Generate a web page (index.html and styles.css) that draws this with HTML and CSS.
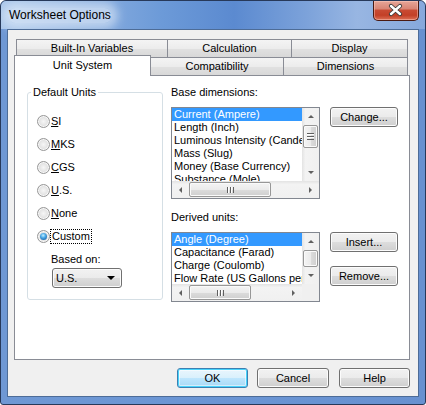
FILE: index.html
```html
<!DOCTYPE html>
<html>
<head>
<meta charset="utf-8">
<link rel="stylesheet" href="styles.css">
</head>
<body>
<div class="window">
  <div class="titlebar">
    <span class="title">Worksheet Options</span>
    <div class="close">
      <svg width="44" height="18" viewBox="0 0 44 18">
        <path d="M17 5 L26 13 M26 5 L17 13" stroke="#3a3a3a" stroke-width="4.2" stroke-linecap="round" fill="none"/>
        <path d="M17 5 L26 13 M26 5 L17 13" stroke="#ffffff" stroke-width="2.4" stroke-linecap="round" fill="none"/>
      </svg>
    </div>
  </div>
  <div class="client">
    <div class="tabs">
      <div class="tabrow back">
        <div class="tab t-builtin">Built-In Variables</div>
        <div class="tab t-calc">Calculation</div>
        <div class="tab t-display">Display</div>
      </div>
      <div class="tabrow front">
        <div class="tab sel">Unit System</div>
        <div class="tab t-compat">Compatibility</div>
        <div class="tab t-dims">Dimensions</div>
      </div>
    </div>
    <div class="panel">
      <fieldset class="group">
        <legend>Default Units</legend>
        <div class="radio-row"><span class="radio"></span><span class="rlabel"><u>S</u>I</span></div>
        <div class="radio-row"><span class="radio"></span><span class="rlabel"><u>M</u>KS</span></div>
        <div class="radio-row"><span class="radio"></span><span class="rlabel"><u>C</u>GS</span></div>
        <div class="radio-row"><span class="radio"></span><span class="rlabel"><u>U</u>.S.</span></div>
        <div class="radio-row"><span class="radio"></span><span class="rlabel"><u>N</u>one</span></div>
        <div class="radio-row"><span class="radio checked"></span><span class="rlabel focus">Custom</span></div>
        <div class="based">Based on:</div>
        <div class="select"><span class="sel-text">U.S.</span><span class="caret"></span></div>
      </fieldset>
      <div class="right">
        <div class="section">
          <div class="listcol">
            <div class="caption">Base dimensions:</div>
            <div class="listbox base">
              <div class="items">
                <div class="item selected">Current (Ampere)</div>
                <div class="item">Length (Inch)</div>
                <div class="item">Luminous Intensity (Candela)</div>
                <div class="item">Mass (Slug)</div>
                <div class="item">Money (Base Currency)</div>
                <div class="item">Substance (Mole)</div>
                <div class="item">Temperature (Fahrenheit)</div>
              </div>
              <div class="vscroll">
                <div class="arr up"></div>
                <div class="vtrack"><div class="vthumb"><span class="vgrip"></span></div></div>
                <div class="arr down"></div>
              </div>
              <div class="hscroll full">
                <div class="arr left"></div>
                <div class="htrack"><div class="hthumb"><span class="hgrip"></span></div></div>
                <div class="arr right"></div>
              </div>
            </div>
          </div>
          <div class="btncol">
            <div class="btn">Change...</div>
          </div>
        </div>
        <div class="section second">
          <div class="listcol">
            <div class="caption">Derived units:</div>
            <div class="listbox derived">
              <div class="items">
                <div class="item selected">Angle (Degree)</div>
                <div class="item">Capacitance (Farad)</div>
                <div class="item">Charge (Coulomb)</div>
                <div class="item">Flow Rate (US Gallons per Minute)</div>
                <div class="item">Force (Pound)</div>
              </div>
              <div class="vscroll">
                <div class="arr up"></div>
                <div class="vtrack"><div class="vthumb short"></div></div>
                <div class="arr down"></div>
              </div>
              <div class="hscroll">
                <div class="arr left"></div>
                <div class="htrack"><div class="hthumb narrow"><span class="hgrip"></span></div></div>
                <div class="arr right"></div>
              </div>
              <div class="corner"></div>
            </div>
          </div>
          <div class="btncol">
            <div class="btn">Insert...</div>
            <div class="btn gap">Remove...</div>
          </div>
        </div>
      </div>
    </div>
    <div class="footer">
      <div class="btn fbtn default">OK</div>
      <div class="btn fbtn cancel">Cancel</div>
      <div class="btn fbtn">Help</div>
    </div>
  </div>
</div>
</body>
</html>
```

FILE: styles.css
```css
* { box-sizing: border-box; }
html, body { margin: 0; padding: 0; background: #ffffff; }
body {
  font-family: "Liberation Sans", Arial, sans-serif;
  font-size: 11px;
  color: #000;
}
.window {
  width: 426px;
  height: 405px;
  border: 1px solid #27395a;
  border-radius: 6px 6px 3px 3px;
  background: linear-gradient(to right, #6f98d4 0%, #6a95d4 50%, #6891d0 100%);
  padding: 0 6px 7px 6px;
  display: flex;
  flex-direction: column;
  overflow: hidden;
}
.titlebar {
  height: 28px;
  margin: 0 -6px;
  padding: 0 6px 0 7px;
  display: flex;
  align-items: flex-start;
  background: linear-gradient(to right, #a9c6ea 0%, #8cb0e0 18%, #6c9ad8 38%, #5b8ad0 55%, #7ca2da 72%, #98b6e2 84%, #86a8dc 100%);
  border-radius: 5px 5px 0 0;
}
.title {
  margin-top: 7px;
  font-size: 12px;
  line-height: 15px;
  color: #000;
  background: rgba(235, 243, 252, 0.55);
  border-radius: 8px;
  box-shadow: 0 0 10px 6px rgba(235, 243, 252, 0.55);
  padding: 0 1px;
}
.close {
  margin-left: auto;
  margin-right: 0;
  width: 46px;
  height: 20px;
  border: 1px solid #4a1a12;
  border-top: none;
  border-radius: 0 0 5px 5px;
  background: linear-gradient(to bottom, #e7a698 0%, #d98676 40%, #c84a32 50%, #c34027 75%, #dc7055 100%);
  box-shadow: inset 0 0 0 1px rgba(255, 210, 200, 0.45);
}
.close svg { display: block; }
.client {
  flex: 1;
  border: 1px solid #4d6c97;
  background: #f0f0f0;
  padding: 9px 8px 8px 6px;
  display: flex;
  flex-direction: column;
}
.tabs { display: flex; flex-direction: column; }
.tabrow { display: flex; height: 18px; align-items: flex-start; }
.tabrow.back { padding-left: 2px; }
.tab {
  height: 18px;
  border: 1px solid #898c95;
  border-bottom: none;
  background: linear-gradient(to bottom, #f4f4f4 0%, #ececec 50%, #e1e1e1 51%, #d8d8d8 100%);
  text-align: center;
  line-height: 17px;
  white-space: nowrap;
}
.tab + .tab { margin-left: -1px; }
.t-builtin { width: 152px; }
.t-calc { width: 125px; }
.t-display { width: 117px; }
.tab.sel {
  width: 137px;
  height: 21px;
  margin-top: -2px;
  background: #ffffff;
  line-height: 18px;
  position: relative;
  z-index: 2;
}
.t-compat { width: 134px; }
.t-dims { width: 125px; }
.panel {
  height: 285px;
  background: #ffffff;
  border: 1px solid #898c95;
  display: flex;
  align-items: flex-start;
  padding: 10px 0 0 12px;
  gap: 8px;
}
.group {
  margin: 0;
  width: 136px;
  border: 1px solid #d5dfe5;
  border-radius: 3px;
  padding: 11px 0 11px 9px;
  min-inline-size: 0;
}
.group legend {
  padding: 0 2px;
  margin-left: -6px;
  line-height: 13px;
}
.radio-row {
  height: 23px;
  display: flex;
  align-items: center;
}
.radio {
  width: 13px;
  height: 13px;
  border-radius: 50%;
  border: 1px solid #979797;
  background: radial-gradient(circle at 50% 50%, #f6f6f6 0%, #e6e6e6 45%, #d0d0d0 100%);
  box-shadow: inset 0 0 0 1px #f8f8f8;
  display: flex;
  align-items: center;
  justify-content: center;
}
.radio.checked::before {
  content: "";
  width: 7px;
  height: 7px;
  border-radius: 50%;
  background: radial-gradient(circle at 45% 35%, #c2efff 0%, #4aa8e6 40%, #1d62a6 85%, #184f88 100%);
}
.rlabel {
  margin-left: 1px;
  line-height: 13px;
}
.rlabel.focus {
  outline: 1px dotted #000;
  outline-offset: 0;
  padding: 0 1px;
}
.based {
  margin-top: 5px;
  margin-left: 14px;
  line-height: 13px;
}
.select {
  margin-top: 2px;
  margin-left: 15px;
  width: 70px;
  height: 20px;
  border: 1px solid #707070;
  border-radius: 3px;
  background: linear-gradient(to bottom, #f2f2f2 0%, #ebebeb 50%, #dddddd 51%, #cfcfcf 100%);
  box-shadow: inset 0 0 0 1px #fbfbfb;
  display: flex;
  align-items: center;
  padding: 0 6px 0 3px;
}
.sel-text { line-height: 13px; }
.caret {
  margin-left: auto;
  width: 0;
  height: 0;
  border-left: 4px solid transparent;
  border-right: 4px solid transparent;
  border-top: 4px solid #000;
}
.right { display: flex; flex-direction: column; }
.section { display: flex; gap: 10px; }
.section.second { margin-top: 12px; }
.listcol { width: 149px; }
.caption { line-height: 13px; margin-bottom: 8px; }
.listbox {
  border: 1px solid #828790;
  background: #fff;
  display: grid;
  grid-template-columns: 130px 17px;
}
.listbox.base { height: 92px; grid-template-rows: 73px 17px; }
.listbox.derived { height: 70px; grid-template-rows: 51px 17px; }
.items { overflow: hidden; }
.item {
  height: 13px;
  line-height: 13px;
  padding-left: 2px;
  white-space: nowrap;
}
.item.selected { background: #3399ff; color: #fff; }
.vscroll {
  display: flex;
  flex-direction: column;
  background: linear-gradient(to right, #e3e3e3 0%, #f3f3f3 20%, #f0f0f0 100%);
}
.hscroll {
  display: flex;
  background: linear-gradient(to bottom, #e3e3e3 0%, #f3f3f3 20%, #f0f0f0 100%);
}
.hscroll.full { grid-column: 1 / span 2; }
.corner { background: #f0f0f0; }
.arr {
  width: 17px;
  height: 17px;
  flex: none;
  display: flex;
  align-items: center;
  justify-content: center;
}
.arr::before { content: ""; width: 0; height: 0; }
.arr.up::before { border-left: 3px solid transparent; border-right: 3px solid transparent; border-bottom: 3px solid #606060; }
.arr.down::before { border-left: 3px solid transparent; border-right: 3px solid transparent; border-top: 3px solid #606060; }
.arr.left::before { border-top: 3px solid transparent; border-bottom: 3px solid transparent; border-right: 3px solid #606060; }
.arr.right::before { border-top: 3px solid transparent; border-bottom: 3px solid transparent; border-left: 3px solid #606060; }
.vtrack { flex: 1; display: flex; flex-direction: column; }
.htrack { flex: 1; display: flex; }
.vthumb {
  height: 23px;
  margin: 0 1px;
  border: 1px solid #979797;
  border-radius: 2px;
  background: linear-gradient(to right, #f4f4f4 0%, #ebebeb 50%, #dcdcdc 51%, #cfcfcf 100%);
  box-shadow: inset 0 0 0 1px #fafafa;
  display: flex;
  align-items: center;
  justify-content: center;
}
.vthumb.short { height: 17px; }
.hthumb {
  width: 82px;
  margin: 1px 0;
  border: 1px solid #979797;
  border-radius: 2px;
  background: linear-gradient(to bottom, #f4f4f4 0%, #ebebeb 50%, #dcdcdc 51%, #cfcfcf 100%);
  box-shadow: inset 0 0 0 1px #fafafa;
  display: flex;
  align-items: center;
  justify-content: center;
}
.hthumb.narrow { width: 62px; }
.vgrip {
  width: 7px;
  height: 7px;
  background: repeating-linear-gradient(to bottom, #5f5f5f 0px, #5f5f5f 1px, #ffffff 1px, #ffffff 2px, transparent 2px, transparent 3px);
}
.hgrip {
  width: 7px;
  height: 6px;
  background: repeating-linear-gradient(to right, #5f5f5f 0px, #5f5f5f 1px, #ffffff 1px, #ffffff 2px, transparent 2px, transparent 3px);
}
.btncol { display: flex; flex-direction: column; padding-top: 21px; }
.btn {
  width: 68px;
  height: 20px;
  border: 1px solid #707070;
  border-radius: 3px;
  background: linear-gradient(to bottom, #f2f2f2 0%, #ebebeb 50%, #dddddd 51%, #cfcfcf 100%);
  box-shadow: inset 0 0 0 1px #fcfcfc;
  text-align: center;
  line-height: 18px;
  white-space: nowrap;
}
.btn.gap { margin-top: 14px; }
.footer {
  margin-top: 8px;
  display: flex;
  justify-content: flex-end;
}
.fbtn { width: 71px; }
.fbtn.cancel { width: 72px; margin-left: 9px; margin-right: 10px; }
.fbtn.default {
  border-color: #3c7fb1;
  background: linear-gradient(to bottom, #eaf6fd 0%, #d9f0fc 50%, #bee6fd 51%, #a7d9f5 100%);
  box-shadow: inset 0 0 0 1px #48d3fb, inset 0 0 0 2px rgba(255,255,255,0.5);
}
```
